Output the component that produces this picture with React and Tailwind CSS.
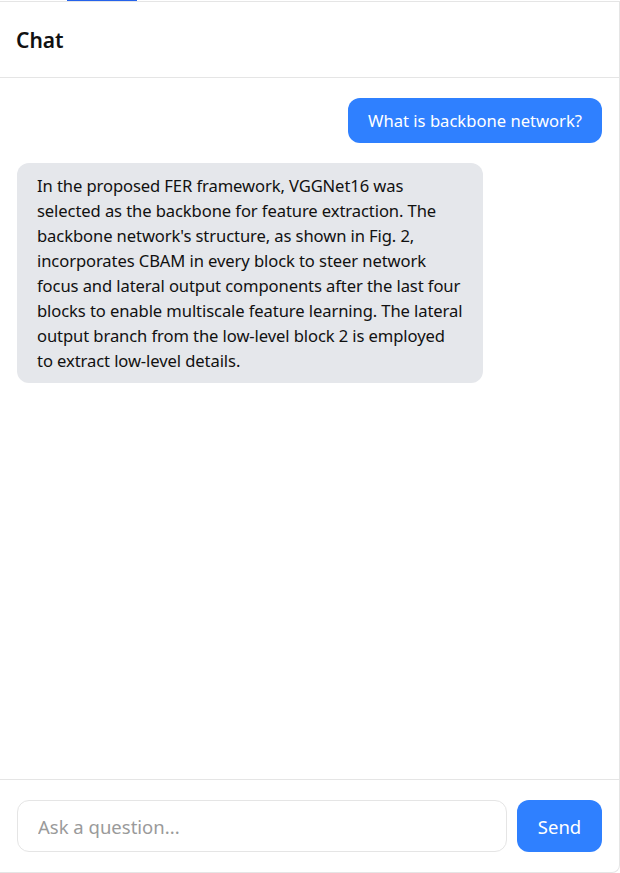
import React from 'react';

const messages = [
  { role: 'user', text: 'What is backbone network?' },
  {
    role: 'assistant',
    text:
      "In the proposed FER framework, VGGNet16 was selected as the backbone for feature extraction. The backbone network's structure, as shown in Fig. 2, incorporates CBAM in every block to steer network focus and lateral output components after the last four blocks to enable multiscale feature learning. The lateral output branch from the low-level block 2 is employed to extract low-level details.",
  },
];

const Bubble = ({ role, text }) => {
  const isUser = role === 'user';
  return (
    <div className={isUser ? 'flex justify-end' : 'flex justify-start'}>
      <div
        className={
          isUser
            ? 'max-w-[80%] rounded-xl bg-[#2f80ff] px-5 py-2.5 tracking-normal text-white'
            : 'max-w-[466px] rounded-xl bg-[#e5e7eb] px-5 py-2.5 text-[#111]'
        }
      >
        {text}
      </div>
    </div>
  );
};

export default function App() {
  return (
    <div className="h-[873px] w-[620px] bg-white font-['Noto_Sans',sans-serif] text-[16.6px] leading-[25px] tracking-[-0.1px]">
      <div className="flex h-px">
        <div className="w-[67px]" />
        <div className="w-[70px] bg-[#2563eb]" />
      </div>

      <div className="flex h-[872px] flex-col rounded-br-lg border-t border-r border-b border-[#e5e5e5]">
        <div className="flex h-[76px] items-center border-b border-[#e5e5e5] px-4 pt-0.5">
          <h2 className="text-[21px] font-semibold tracking-normal text-[#111]">Chat</h2>
        </div>

        <div className="flex flex-1 flex-col gap-5 overflow-y-auto px-[17px] pt-5">
          {messages.map((m, i) => (
            <Bubble key={i} role={m.role} text={m.text} />
          ))}
        </div>

        <div className="flex gap-2.5 border-t border-[#e5e5e5] px-[17px] py-5">
          <input
            type="text"
            placeholder="Ask a question..."
            className="h-[52px] min-w-0 flex-1 rounded-xl border border-[#e5e5e5] px-5 text-[18.5px] tracking-normal text-[#111] placeholder-[#9a9a9a] outline-none"
          />
          <button className="h-[52px] w-[85px] rounded-xl bg-[#2f80ff] text-[18.5px] tracking-normal text-white">
            Send
          </button>
        </div>
      </div>
    </div>
  );
}
